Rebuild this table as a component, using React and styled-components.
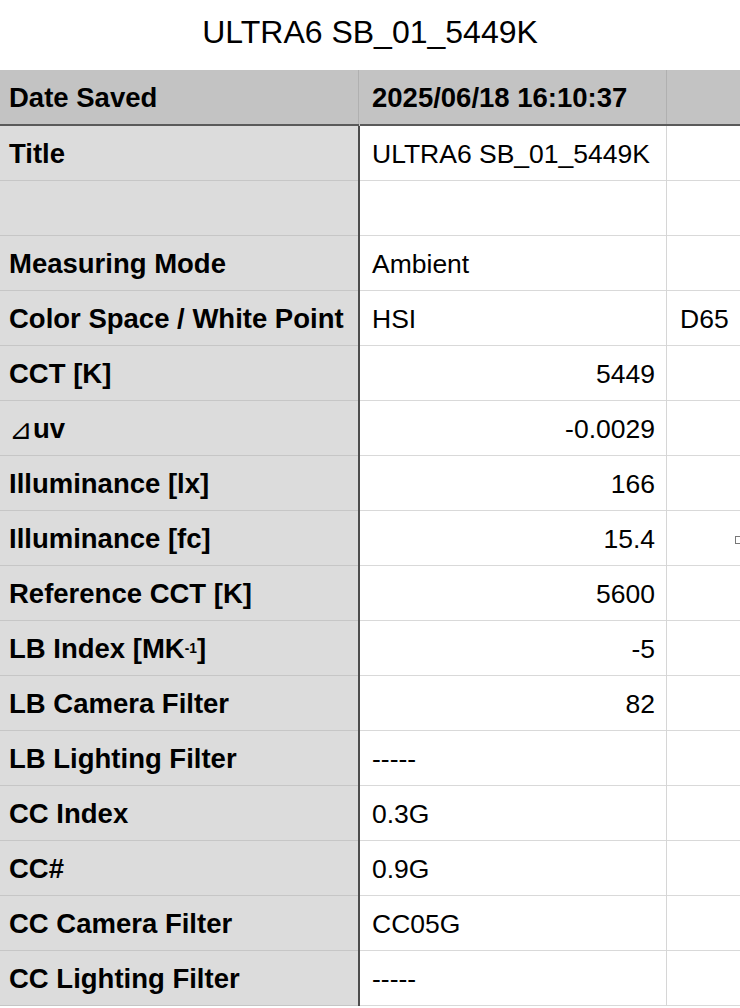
import React from 'react';
import styled, { createGlobalStyle } from 'styled-components';

const GlobalStyle = createGlobalStyle`
    html, body {
        margin: 0;
        padding: 0;
        background: #ffffff;
        overflow: hidden;
    }
    body {
        font-family: "Liberation Sans", Arial, sans-serif;
        color: #000;
    }
`;

const Page = styled.div`
    width: 740px;
    height: 1008px;
    overflow: hidden;
`;

const Heading = styled.h1`
    margin: 0;
    height: 70px;
    display: flex;
    align-items: center;
    justify-content: center;
    font-size: 32px;
    font-weight: 400;
    padding-bottom: 5px;
    box-sizing: border-box;
`;

const Sheet = styled.div`
    display: grid;
    grid-template-columns: 358px 2px 306px 1px 73px;
`;

const Row = styled.div`
    display: contents;
`;

const Label = styled.div`
    height: ${p => (p.$head ? 56 : 55)}px;
    box-sizing: border-box;
    display: flex;
    align-items: center;
    padding: 2px 0 0 9px;
    font-size: 27.5px;
    font-weight: 700;
    white-space: nowrap;
    background: ${p => (p.$head ? '#c3c3c3' : '#dcdcdc')};
    border-bottom: ${p => (p.$head ? '2px solid #5a5a5a' : '1px solid #c6c6c6')};
`;

const Divider = styled.div`
    background: ${p => (p.$head ? '#b0b0b0' : '#4d4d4d')};
    border-bottom: ${p => (p.$head ? '2px solid #5a5a5a' : 'none')};
    width: ${p => (p.$head ? '1px' : '2px')};
    ${p => p.$head && 'justify-self: start; box-shadow: 1px 0 0 #c3c3c3;'}
`;

const Value = styled.div`
    height: ${p => (p.$head ? 56 : 55)}px;
    box-sizing: border-box;
    display: flex;
    align-items: center;
    justify-content: ${p => (p.$right ? 'flex-end' : 'flex-start')};
    padding: 2px 11px 0 12px;
    font-size: ${p => (p.$head ? 27.5 : 26.5)}px;
    font-weight: ${p => (p.$head ? 700 : 400)};
    white-space: nowrap;
    background: ${p => (p.$head ? '#c3c3c3' : '#ffffff')};
    border-bottom: ${p => (p.$head ? '2px solid #5a5a5a' : '1px solid #d9d9d9')};
`;

const ColLine = styled.div`
    background: ${p => (p.$head ? '#b0b0b0' : '#d6d6d6')};
    border-bottom: ${p => (p.$head ? '2px solid #5a5a5a' : 'none')};
`;

const Extra = styled(Value)`
    padding: 2px 0 0 13px;
    justify-content: flex-start;
    position: relative;
    overflow: hidden;
`;

const Marker = styled.span`
    position: absolute;
    right: 0;
    top: 25px;
    width: 4px;
    height: 6px;
    border-left: 1px solid #777;
    border-top: 1px solid #777;
    border-bottom: 1px solid #777;
`;

const Sup = styled.sup`
    font-size: 0.5em;
    vertical-align: 0.7em;
    line-height: 0;
`;

const Delta = styled.span`
    font-weight: 400;
    margin-right: 1px;
`;

const rows = [
    { label: 'Title', value: 'ULTRA6 SB_01_5449K' },
    { label: '', value: '' },
    { label: 'Measuring Mode', value: 'Ambient' },
    { label: 'Color Space / White Point', value: 'HSI', extra: 'D65' },
    { label: 'CCT [K]', value: '5449', right: true },
    { label: <><Delta>⊿</Delta>uv</>, value: '-0.0029', right: true },
    { label: 'Illuminance [lx]', value: '166', right: true },
    { label: 'Illuminance [fc]', value: '15.4', right: true, marker: true },
    { label: 'Reference CCT [K]', value: '5600', right: true },
    { label: <>LB Index [MK<Sup>-1</Sup>]</>, value: '-5', right: true },
    { label: 'LB Camera Filter', value: '82', right: true },
    { label: 'LB Lighting Filter', value: '-----' },
    { label: 'CC Index', value: '0.3G' },
    { label: 'CC#', value: '0.9G' },
    { label: 'CC Camera Filter', value: 'CC05G' },
    { label: 'CC Lighting Filter', value: '-----' },
];

export default function App() {
    return (
        <Page>
            <GlobalStyle />
            <Heading>ULTRA6 SB_01_5449K</Heading>
            <Sheet>
                <Row>
                    <Label $head>Date Saved</Label>
                    <Divider $head />
                    <Value $head>2025/06/18 16:10:37</Value>
                    <ColLine $head />
                    <Extra $head />
                </Row>
                {rows.map((r, i) => (
                    <Row key={i}>
                        <Label>{r.label}</Label>
                        <Divider />
                        <Value $right={r.right}>{r.value}</Value>
                        <ColLine />
                        <Extra>
                            {r.extra}
                            {r.marker && <Marker />}
                        </Extra>
                    </Row>
                ))}
            </Sheet>
        </Page>
    );
}
